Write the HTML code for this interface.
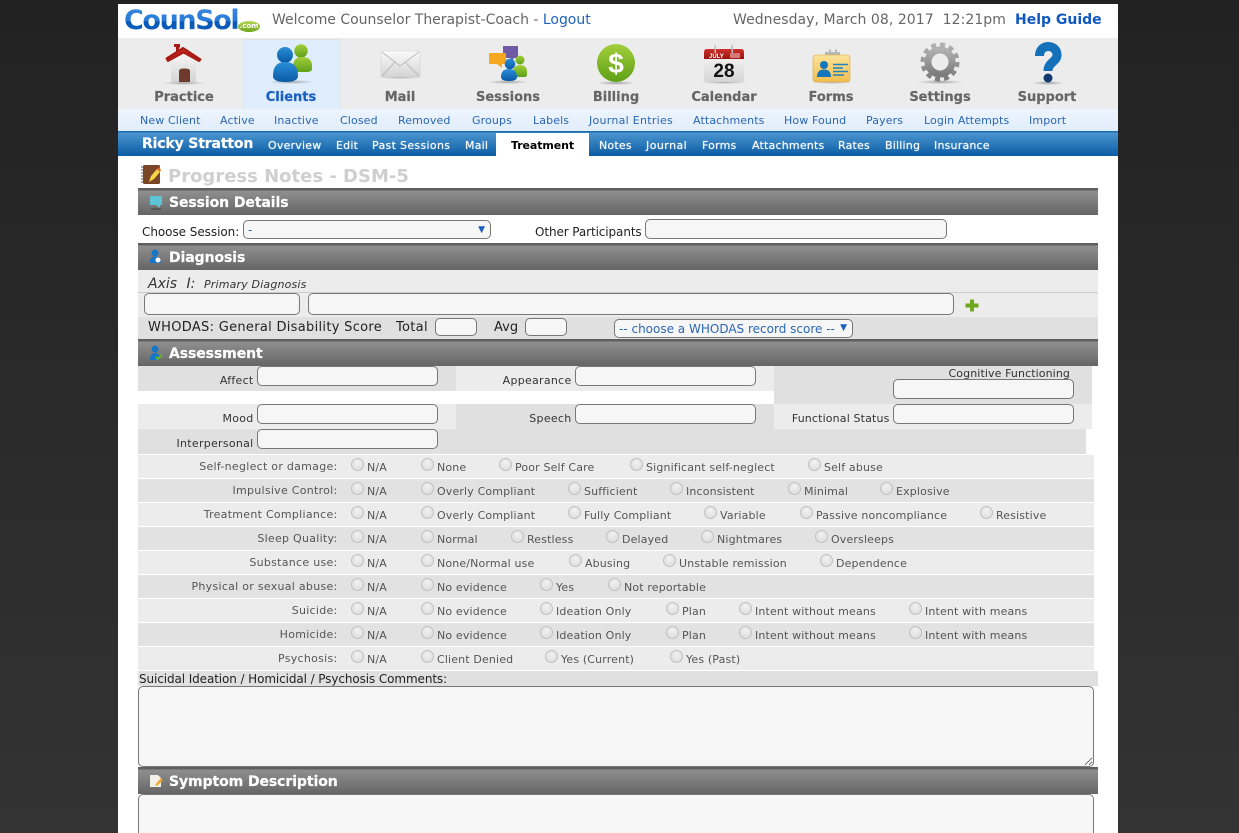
<!DOCTYPE html>
<html><head><meta charset="utf-8"><title>CounSol</title>
<style>
*{box-sizing:border-box}
html,body{margin:0;padding:0;width:1239px;height:833px;overflow:hidden}
body{position:relative;background:linear-gradient(#222 0,#333 100%);font-family:"DejaVu Sans","Liberation Sans",sans-serif;font-size:11px;color:#333}
.b{position:absolute}
.t{position:absolute;white-space:nowrap;line-height:14px}
.r{text-align:right}
.nav{font-size:13px;font-weight:bold;color:#666;width:100px;text-align:center;top:90px;line-height:15px;position:absolute;-webkit-text-stroke:.2px #666}
.sub{position:absolute;top:114px;line-height:14px;color:#2a66b5;white-space:nowrap;font-size:11px;letter-spacing:.12px}
.cl{position:absolute;top:139px;line-height:14px;color:#fff;white-space:nowrap;font-size:11px;letter-spacing:.2px;text-shadow:0 0 1px rgba(255,255,255,.7)}
.hd{position:absolute;left:138px;width:960px;height:27px;background:linear-gradient(#5f5f5f 0,#5f5f5f 2px,#8f8f8f 3px,#656565 100%)}
.hd span{position:absolute;left:31px;top:6px;line-height:18px;font-size:14px;font-weight:bold;color:#fff;white-space:nowrap;letter-spacing:-.08px;-webkit-text-stroke:.2px #fff}
input,textarea{position:absolute;margin:0;padding:0;background:#f6f6f6;border:1px solid #777;border-radius:5px;outline:0;display:block}
.sel{position:absolute;background:#f6f6f6;border:1px solid #777;border-radius:5px;color:#2a66b5;font-size:12px;line-height:18px;white-space:nowrap}
.sel em{position:absolute;font-style:normal;font-size:9px;color:#1a5fc0;top:0}
.row{position:absolute;left:0;width:1239px;height:22px}
.row>u{position:absolute;left:138px;width:956px;height:23px;top:0}
.row>span{position:absolute;top:6px;line-height:14px;color:#555;white-space:nowrap;font-size:11px;letter-spacing:.15px}
.row>span.l{left:138px;width:199.500px;text-align:right;top:5px;letter-spacing:.28px}
.row>i{position:absolute;top:3px;width:13px;height:13px;border-radius:50%;border:1px solid #c0c0c0;background:radial-gradient(circle at 50% 35%,#f2f2f2,#d8d8d8)}
.lb{color:#333;font-size:11px;letter-spacing:.28px}
</style></head><body>
<div class="b" style="left:118px;top:4px;width:1000px;height:829px;background:#fff"></div>
<div class="b" style="left:118px;top:38px;width:1000px;height:71px;background:#ececec"></div>
<div class="b" style="left:243px;top:39px;width:98px;height:70px;background:#dfedfc;border:1px solid #e6e6e6;border-bottom:0;border-top:1px solid #e2e2e2"></div>
<div class="b" style="left:118px;top:109px;width:1000px;height:23px;background:linear-gradient(#edf5fe,#e1edfb)"></div>
<div class="b" style="left:118px;top:131px;width:1000px;height:25px;background:linear-gradient(#1a6db0 0,#1a6db0 1px,#4a94cf 2px,#0a5ca4 100%)"></div>
<div class="b" style="left:496px;top:133px;width:93px;height:23px;background:#fff"></div>

<!-- header -->
<div class="t" style="left:124px;top:4px;font:bold 27px/34px 'DejaVu Sans',sans-serif;letter-spacing:-1.4px;background:linear-gradient(#3b8be0 0,#2a7bd8 50%,#0a58b5 52%,#0d63c4 100%);-webkit-background-clip:text;background-clip:text;color:transparent">CounSol</div>
<div class="t" style="left:238px;top:21px;width:22px;height:11px;border-radius:50%;background:linear-gradient(#b5d75a,#6fa51e);color:#fff;font:bold 7px/11px 'DejaVu Sans',sans-serif;text-align:center">.com</div>
<div class="t" style="left:272px;top:13px;font-size:14px;color:#666;letter-spacing:-.02px">Welcome Counselor Therapist-Coach - <span style="color:#1f63b8">Logout</span></div>
<div class="t" style="left:733px;top:13px;font-size:14px;color:#666;letter-spacing:.05px">Wednesday, March 08, 2017&nbsp; 12:21pm</div>
<div class="t" style="left:1015px;top:13px;font-size:14px;font-weight:bold;color:#1058c0">Help Guide</div>

<div class="nav" style="left:134px">Practice</div>
<div class="nav" style="left:241px;color:#1a5fc0;-webkit-text-stroke:.2px #1a5fc0">Clients</div>
<div class="nav" style="left:350px">Mail</div>
<div class="nav" style="left:458px">Sessions</div>
<div class="nav" style="left:566px">Billing</div>
<div class="nav" style="left:674px">Calendar</div>
<div class="nav" style="left:781px">Forms</div>
<div class="nav" style="left:890px">Settings</div>
<div class="nav" style="left:997px">Support</div>

<span class="sub" style="left:140px">New Client</span>
<span class="sub" style="left:220px">Active</span>
<span class="sub" style="left:274px">Inactive</span>
<span class="sub" style="left:340px">Closed</span>
<span class="sub" style="left:398px">Removed</span>
<span class="sub" style="left:472px">Groups</span>
<span class="sub" style="left:533px">Labels</span>
<span class="sub" style="left:589px;letter-spacing:.28px">Journal Entries</span>
<span class="sub" style="left:693px">Attachments</span>
<span class="sub" style="left:784px">How Found</span>
<span class="sub" style="left:866px">Payers</span>
<span class="sub" style="left:924px">Login Attempts</span>
<span class="sub" style="left:1029px">Import</span>

<div class="t" style="left:142px;top:137px;font-size:14px;font-weight:bold;color:#fff;letter-spacing:-.15px;-webkit-text-stroke:.2px #fff">Ricky Stratton</div>
<span class="cl" style="left:268px">Overview</span>
<span class="cl" style="left:336px">Edit</span>
<span class="cl" style="left:372px;letter-spacing:.32px">Past Sessions</span>
<span class="cl" style="left:465px">Mail</span>
<span class="cl" style="left:511px;top:139px;color:#000;font-weight:bold;text-shadow:none;letter-spacing:-.1px">Treatment</span>
<span class="cl" style="left:599px">Notes</span>
<span class="cl" style="left:646px;letter-spacing:.45px">Journal</span>
<span class="cl" style="left:702px">Forms</span>
<span class="cl" style="left:752px">Attachments</span>
<span class="cl" style="left:838px">Rates</span>
<span class="cl" style="left:885px">Billing</span>
<span class="cl" style="left:934px">Insurance</span>

<div class="t" style="left:168px;top:166px;font-size:18px;line-height:22px;font-weight:bold;color:#cfcfcf">Progress Notes - DSM-5</div>

<!-- Session details -->
<div class="hd" style="top:188px"><span>Session Details</span></div>
<div class="t" style="left:142px;top:225px;font-size:12px;color:#222;letter-spacing:-.05px">Choose Session:</div>
<div class="sel" style="left:243px;top:220px;width:248px;height:19px;padding-left:4px">-<em style="right:5px">▼</em></div>
<div class="t" style="left:535px;top:225px;font-size:12px;color:#222;letter-spacing:-.1px">Other Participants</div>
<input style="left:645px;top:219px;width:302px;height:20px">

<!-- Diagnosis -->
<div class="hd" style="top:243px"><span>Diagnosis</span></div>
<div class="b" style="left:138px;top:270px;width:960px;height:47px;background:#ececec"></div>
<div class="b" style="left:138px;top:292px;width:960px;height:1px;background:#ccc"></div>
<div class="b" style="left:138px;top:317px;width:960px;height:22px;background:#e0e0e0"></div>
<div class="t" style="left:148px;top:277px;font-size:14px;font-style:italic;color:#333;word-spacing:5px">Axis I:</div>
<div class="t" style="left:204px;top:278px;font-size:11px;font-style:italic;color:#333;letter-spacing:.17px">Primary Diagnosis</div>
<input style="left:144px;top:293px;width:156px;height:22px">
<input style="left:308px;top:293px;width:646px;height:22px">
<div class="t" style="left:148px;top:321px;font-size:13px;color:#222;letter-spacing:.3px">WHODAS: General Disability Score</div>
<div class="t" style="left:396px;top:321px;font-size:13px;color:#222;letter-spacing:.3px">Total</div>
<input style="left:435px;top:318px;width:42px;height:18px">
<div class="t" style="left:494px;top:321px;font-size:13px;color:#222">Avg</div>
<input style="left:525px;top:318px;width:42px;height:18px">
<div class="sel" style="left:614px;top:319px;width:239px;height:19px;padding-left:4px">-- choose a WHODAS record score --<em style="right:5px;top:-1px">▼</em></div>

<!-- Assessment -->
<div class="hd" style="top:339px"><span>Assessment</span></div>
<div class="b" style="left:138px;top:366px;width:318px;height:25px;background:#e0e0e0"></div>
<div class="b" style="left:456px;top:366px;width:318px;height:25px;background:#ececec"></div>
<div class="b" style="left:774px;top:366px;width:318px;height:38px;background:#e0e0e0"></div>
<div class="b" style="left:138px;top:404px;width:318px;height:25px;background:#ececec"></div>
<div class="b" style="left:456px;top:404px;width:318px;height:25px;background:#e0e0e0"></div>
<div class="b" style="left:774px;top:404px;width:318px;height:25px;background:#ececec"></div>
<div class="b" style="left:138px;top:429px;width:948px;height:25px;background:#e0e0e0"></div>
<div class="t r lb" style="left:138px;width:115.500px;top:374px">Affect</div>
<input style="left:257px;top:366px;width:181px;height:20px">
<div class="t r lb" style="left:456px;width:115.500px;top:374px">Appearance</div>
<input style="left:575px;top:366px;width:181px;height:20px">
<div class="t r lb" style="left:900px;width:170px;top:367px;letter-spacing:.1px">Cognitive Functioning</div>
<input style="left:893px;top:379px;width:181px;height:20px">
<div class="t r lb" style="left:138px;width:115.500px;top:412px">Mood</div>
<input style="left:257px;top:404px;width:181px;height:20px">
<div class="t r lb" style="left:456px;width:115.500px;top:412px">Speech</div>
<input style="left:575px;top:404px;width:181px;height:20px">
<div class="t r lb" style="left:774px;width:115.500px;top:412px;letter-spacing:.15px">Functional Status</div>
<input style="left:893px;top:404px;width:181px;height:20px">
<div class="t r lb" style="left:138px;width:115.500px;top:437px">Interpersonal</div>
<input style="left:257px;top:429px;width:181px;height:20px">

<div class="row" style="top:455px"><u style="background:#ececec"></u><span class="l">Self-neglect or damage:</span><i style="left:351px"></i><span style="left:367px">N/A</span><i style="left:421px"></i><span style="left:437px">None</span><i style="left:499px"></i><span style="left:515px">Poor Self Care</span><i style="left:630px"></i><span style="left:646px">Significant self-neglect</span><i style="left:808px"></i><span style="left:824px">Self abuse</span></div>
<div class="row" style="top:479px"><u style="background:#e2e2e2"></u><span class="l">Impulsive Control:</span><i style="left:351px"></i><span style="left:367px">N/A</span><i style="left:421px"></i><span style="left:437px">Overly Compliant</span><i style="left:568px"></i><span style="left:584px">Sufficient</span><i style="left:670px"></i><span style="left:686px">Inconsistent</span><i style="left:788px"></i><span style="left:804px">Minimal</span><i style="left:880px"></i><span style="left:896px">Explosive</span></div>
<div class="row" style="top:503px"><u style="background:#ececec"></u><span class="l">Treatment Compliance:</span><i style="left:351px"></i><span style="left:367px">N/A</span><i style="left:421px"></i><span style="left:437px">Overly Compliant</span><i style="left:568px"></i><span style="left:584px">Fully Compliant</span><i style="left:704px"></i><span style="left:720px">Variable</span><i style="left:800px"></i><span style="left:816px">Passive noncompliance</span><i style="left:980px"></i><span style="left:996px">Resistive</span></div>
<div class="row" style="top:527px"><u style="background:#e2e2e2"></u><span class="l">Sleep Quality:</span><i style="left:351px"></i><span style="left:367px">N/A</span><i style="left:421px"></i><span style="left:437px">Normal</span><i style="left:511px"></i><span style="left:527px">Restless</span><i style="left:606px"></i><span style="left:622px">Delayed</span><i style="left:701px"></i><span style="left:717px">Nightmares</span><i style="left:815px"></i><span style="left:831px">Oversleeps</span></div>
<div class="row" style="top:551px"><u style="background:#ececec"></u><span class="l">Substance use:</span><i style="left:351px"></i><span style="left:367px">N/A</span><i style="left:421px"></i><span style="left:437px">None/Normal use</span><i style="left:569px"></i><span style="left:585px">Abusing</span><i style="left:663px"></i><span style="left:679px">Unstable remission</span><i style="left:820px"></i><span style="left:836px">Dependence</span></div>
<div class="row" style="top:575px"><u style="background:#e2e2e2"></u><span class="l">Physical or sexual abuse:</span><i style="left:351px"></i><span style="left:367px">N/A</span><i style="left:421px"></i><span style="left:437px">No evidence</span><i style="left:540px"></i><span style="left:556px">Yes</span><i style="left:608px"></i><span style="left:624px">Not reportable</span></div>
<div class="row" style="top:599px"><u style="background:#ececec"></u><span class="l">Suicide:</span><i style="left:351px"></i><span style="left:367px">N/A</span><i style="left:421px"></i><span style="left:437px">No evidence</span><i style="left:540px"></i><span style="left:556px">Ideation Only</span><i style="left:666px"></i><span style="left:682px">Plan</span><i style="left:739px"></i><span style="left:755px">Intent without means</span><i style="left:909px"></i><span style="left:925px">Intent with means</span></div>
<div class="row" style="top:623px"><u style="background:#e2e2e2"></u><span class="l">Homicide:</span><i style="left:351px"></i><span style="left:367px">N/A</span><i style="left:421px"></i><span style="left:437px">No evidence</span><i style="left:540px"></i><span style="left:556px">Ideation Only</span><i style="left:666px"></i><span style="left:682px">Plan</span><i style="left:739px"></i><span style="left:755px">Intent without means</span><i style="left:909px"></i><span style="left:925px">Intent with means</span></div>
<div class="row" style="top:647px"><u style="background:#ececec"></u><span class="l">Psychosis:</span><i style="left:351px"></i><span style="left:367px">N/A</span><i style="left:421px"></i><span style="left:437px">Client Denied</span><i style="left:545px"></i><span style="left:561px">Yes (Current)</span><i style="left:670px"></i><span style="left:686px">Yes (Past)</span></div>

<div class="b" style="left:138px;top:671px;width:960px;height:15px;background:#e0e0e0"></div>
<div class="t" style="left:139px;top:672px;font-size:12px;color:#222;letter-spacing:-.1px">Suicidal Ideation / Homicidal / Psychosis Comments:</div>
<textarea style="left:138px;top:686px;width:956px;height:81px"></textarea>
<div class="hd" style="top:767px"><span>Symptom Description</span></div>
<div class="b" style="left:138px;top:794px;width:956px;height:60px;background:#f6f6f6;border:1px solid #777;border-radius:5px"></div>

<!-- icons -->
<svg class="b" style="left:0;top:0" width="1239" height="833" viewBox="0 0 1239 833">
<defs>
<linearGradient id="gBlue" x1="0" y1="0" x2="0" y2="1"><stop offset="0" stop-color="#2a8fd8"/><stop offset="1" stop-color="#0a5aa5"/></linearGradient>
<linearGradient id="gGreen" x1="0" y1="0" x2="0" y2="1"><stop offset="0" stop-color="#a2cf3a"/><stop offset="1" stop-color="#5fa018"/></linearGradient>
<linearGradient id="gRed" x1="0" y1="0" x2="0" y2="1"><stop offset="0" stop-color="#d2302a"/><stop offset="1" stop-color="#98140f"/></linearGradient>
<linearGradient id="gWhite" x1="0" y1="0" x2="0" y2="1"><stop offset="0" stop-color="#fbfbfb"/><stop offset="1" stop-color="#d4d4d4"/></linearGradient>
<linearGradient id="gYel" x1="0" y1="0" x2="0" y2="1"><stop offset="0" stop-color="#fbe39a"/><stop offset="1" stop-color="#f2bd4e"/></linearGradient>
<linearGradient id="gGray" x1="0" y1="0" x2="0" y2="1"><stop offset="0" stop-color="#b0b0b0"/><stop offset="1" stop-color="#7d7d7d"/></linearGradient>
<radialGradient id="gShadow"><stop offset="0" stop-color="#888" stop-opacity=".75"/><stop offset="1" stop-color="#888" stop-opacity="0"/></radialGradient>
</defs>
<!-- shadows -->
<ellipse cx="184" cy="83" rx="21" ry="2" fill="url(#gShadow)"/>
<ellipse cx="291" cy="82" rx="23" ry="2" fill="url(#gShadow)"/>
<ellipse cx="400" cy="77" rx="23" ry="2" fill="url(#gShadow)"/>
<ellipse cx="508" cy="82" rx="20" ry="2" fill="url(#gShadow)"/>
<ellipse cx="616" cy="83" rx="20" ry="2" fill="url(#gShadow)"/>
<ellipse cx="724" cy="82" rx="23" ry="2" fill="url(#gShadow)"/>
<ellipse cx="832" cy="82" rx="21" ry="2" fill="url(#gShadow)"/>
<ellipse cx="940" cy="82" rx="23" ry="2" fill="url(#gShadow)"/>
<ellipse cx="1048" cy="83" rx="17" ry="2" fill="url(#gShadow)"/>
<!-- house -->
<path d="M171 60L184 50L196 60V80Q196 82 194 82H173Q171 82 171 80Z" fill="url(#gWhite)"/>
<path d="M174 44h6v3l-1 1v4l-3 2v-7h-2z" fill="#a81a14"/>
<path d="M166.500 58.500L183 48L200.500 59.500L199 61L183.500 52.500L168 61Z" fill="url(#gRed)" stroke="#a81a14" stroke-width="2" stroke-linejoin="round"/>
<path d="M179 82V71Q179 68.500 184.500 68.500Q190 68.500 190 71V82Z" fill="#6d3a2c"/>
<!-- clients -->
<circle cx="301" cy="51" r="6.700" fill="url(#gGreen)"/>
<path d="M293 72V65Q294 57 302 57Q312 57 312 66V69Q312 72 306 72Z" fill="url(#gGreen)"/>
<circle cx="285" cy="55" r="8" fill="url(#gBlue)"/>
<path d="M273 76Q273 62 285 62Q298 62 298 76Q298 82 285 82Q273 82 273 76Z" fill="url(#gBlue)"/>
<!-- mail -->
<rect x="381" y="51" width="39" height="26" rx="2" fill="url(#gWhite)" stroke="#d0d0d0" stroke-width=".6"/>
<path d="M382 52L400 66L419 52M382 76L395 62M419 76L405 62" fill="none" stroke="#bbb" stroke-width="1"/>
<!-- sessions -->
<path d="M503 46h15v12h-4l-2 3-2-3h-7z" fill="#6f5aa5"/>
<circle cx="520" cy="60" r="4.500" fill="url(#gGreen)"/>
<path d="M513 77V71Q514 65 520 65Q527 65 527 72V75Q527 77 524 77Z" fill="url(#gGreen)"/>
<path d="M490 53H505Q506 53 506 54V63Q506 64 505 64H502V68L497 64H490Q489 64 489 63V54Q489 53 490 53Z" fill="#f5a81f"/>
<circle cx="510" cy="64" r="5.300" fill="url(#gBlue)"/>
<path d="M501 77Q501 69 509 69Q517 69 517 77Q517 81 509 81Q501 81 501 77Z" fill="url(#gBlue)"/>
<!-- billing -->
<circle cx="616" cy="63" r="19" fill="url(#gGreen)"/>
<text x="616" y="73" text-anchor="middle" font-family="'Liberation Sans',sans-serif" font-weight="bold" font-size="28" fill="#fff">$</text>
<!-- calendar -->
<rect x="704" y="49" width="40" height="33" rx="3" fill="url(#gWhite)"/>
<path d="M704 59V52Q704 49 707 49H741Q744 49 744 52V59Z" fill="url(#gRed)"/>
<rect x="714.500" y="45" width="1.500" height="8" fill="#bdbdbd"/><rect x="731.500" y="45" width="1.500" height="8" fill="#bdbdbd"/>
<rect x="730" y="53" width="10" height="5" fill="#d47a78"/>
<text x="709" y="58" font-family="'Liberation Sans',sans-serif" font-weight="bold" font-size="6" fill="#fff">JULY</text>
<text x="724" y="77" text-anchor="middle" font-family="'Liberation Sans',sans-serif" font-weight="bold" font-size="19" fill="#111">28</text>
<!-- forms -->
<rect x="825" y="52" width="15" height="7" fill="#b8b8b8"/><rect x="829" y="49.500" width="2" height="3" fill="#b8b8b8"/><rect x="835" y="49.500" width="2" height="3" fill="#b8b8b8"/>
<rect x="813" y="55" width="37" height="27" rx="3" fill="url(#gYel)" stroke="#e2aa3a" stroke-width=".6"/>
<circle cx="824" cy="65" r="4" fill="#1576bd"/>
<path d="M817 77Q817 69.500 824 69.500Q831 69.500 831 77Z" fill="#1576bd"/>
<path d="M833 64.500h15M833 68h10M833 71.500h15M833 75h11" stroke="#1e84c2" stroke-width="1.500"/>
<!-- gear -->
<circle cx="940" cy="62" r="17" fill="none" stroke="url(#gGray)" stroke-width="5" stroke-dasharray="4.900 4"/>
<circle cx="940" cy="62" r="12" fill="none" stroke="url(#gGray)" stroke-width="7"/>
<!-- question -->
<path d="M1039.500 56C1039.500 43 1057 44 1057 55C1057 62 1048 62 1048 71" fill="none" stroke="#1470b8" stroke-width="9"/>
<circle cx="1048" cy="78" r="4.500" fill="#12386f"/>
<!-- title icon -->
<rect x="143" y="165" width="17" height="19" rx="1.500" fill="#7a4526"/>
<path d="M143 167h-2M143 170h-2M143 173h-2M143 176h-2M143 179h-2M143 182h-2" stroke="#555" stroke-width="1"/>
<path d="M149 182L151 176L157 169L160 172L154 179Z" fill="#f6d44b"/>
<path d="M157 169L159 167L161 170L160 172Z" fill="#e2642a"/>
<!-- session details icon -->
<path d="M150 196H162V205H160V208L156 205H150Z" fill="#5fc3d6"/>
<ellipse cx="156" cy="209" rx="6" ry="1" fill="#555"/>
<!-- diagnosis icon -->
<circle cx="155" cy="253" r="3.500" fill="#1576c8"/>
<path d="M149.500 263Q150 256.500 155 256.500Q160 256.500 161 263Z" fill="#1576c8"/>
<circle cx="158" cy="260" r="2.500" fill="#fff"/>
<!-- assessment icon -->
<circle cx="155" cy="349" r="3.500" fill="#1576c8"/>
<path d="M150 360Q150 353 155 353Q160 353 160 360Z" fill="#1576c8"/>
<path d="M156 357L158 359L162 355" fill="none" stroke="#6fb52a" stroke-width="2"/>
<!-- symptom icon -->
<path d="M150 775H158L161 778V787H150Z" fill="#f3f0e6"/>
<path d="M155 785L161 778L163 780L157 786Z" fill="#f2a72e"/>
<!-- plus -->
<path d="M970 299.500h4v4h4.500v4h-4.500v4h-4v-4h-4.500v-4h4.500z" fill="#6fa81e"/>
</svg>
</body></html>
